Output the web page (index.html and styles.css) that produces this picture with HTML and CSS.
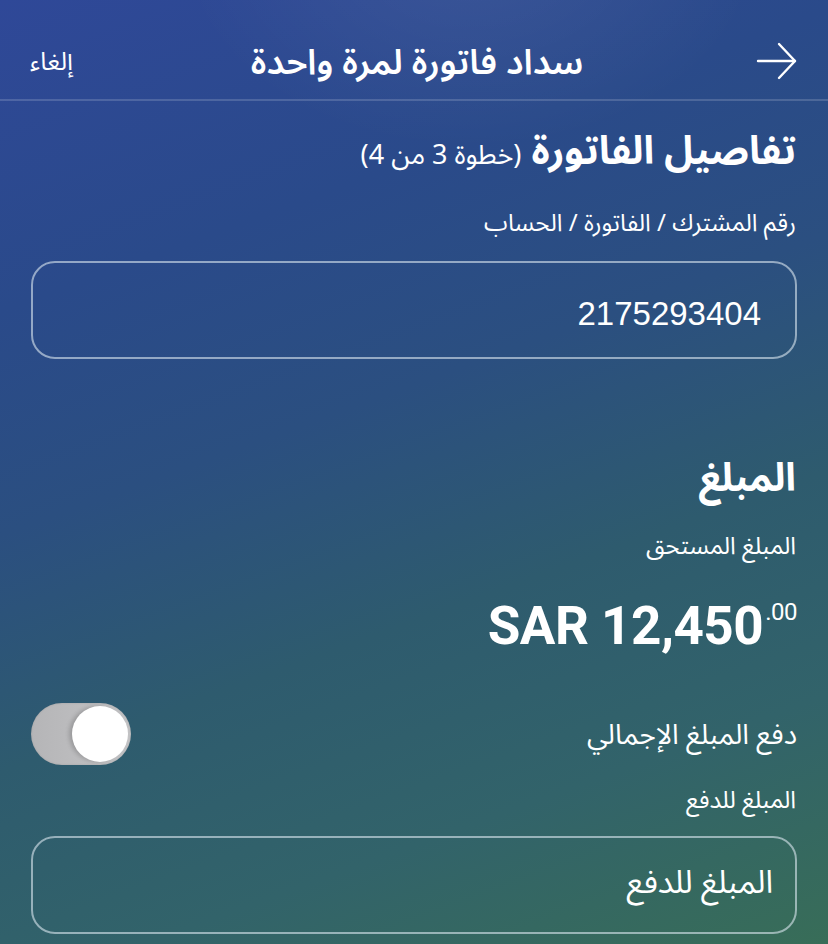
FILE: index.html
```html
<!DOCTYPE html>
<html lang="ar" dir="rtl">
<head>
    <meta charset="UTF-8">
    <meta name="viewport" content="width=device-width, initial-scale=1.0">
    <title>سداد فاتورة لمرة واحدة</title>
    <link rel="stylesheet" href="styles.css">
</head>
<body>
    <div class="screen">
        <header class="topbar">
            <button class="back" aria-label="رجوع">
                <svg width="42" height="40" viewBox="0 0 42 40" fill="none" stroke="#fff" stroke-width="2.4" stroke-linecap="round" stroke-linejoin="round">
                    <path d="M2 20 H39"/>
                    <path d="M23 3 L39 20 L23 37"/>
                </svg>
            </button>
            <h1 class="title">سداد فاتورة لمرة واحدة</h1>
            <button class="cancel">إلغاء</button>
        </header>

        <main class="content">
            <h2 class="section-title">تفاصيل الفاتورة <span class="step">(خطوة 3 من 4)</span></h2>

            <label class="label">رقم المشترك / الفاتورة / الحساب</label>
            <div class="field">
                <span class="field-value">2175293404</span>
            </div>

            <h2 class="section-title amount-title">المبلغ</h2>
            <div class="label">المبلغ المستحق</div>
            <div class="amount" dir="ltr">SAR 12,450<sup>.00</sup></div>

            <div class="toggle-row">
                <span class="toggle-label">دفع المبلغ الإجمالي</span>
                <div class="switch">
                    <div class="knob"></div>
                </div>
            </div>

            <label class="label">المبلغ للدفع</label>
            <div class="field">
                <span class="field-placeholder">المبلغ للدفع</span>
            </div>
        </main>
    </div>
</body>
</html>
```

FILE: styles.css
```css
* {
    margin: 0;
    padding: 0;
    box-sizing: border-box;
}

body {
    font-family: "Noto Sans Arabic", "DejaVu Sans", "Noto Sans", sans-serif;
    color: #fff;
    width: 828px;
    height: 944px;
    overflow: hidden;
}

.screen {
    position: relative;
    width: 828px;
    height: 944px;
    overflow: hidden;
    background:
        radial-gradient(ellipse 420px 300px at 470px -60px, rgba(255, 255, 255, 0.07), rgba(255, 255, 255, 0) 70%),
        linear-gradient(160deg, #2f4898 0%, #2a4a8a 25%, #2b4f80 43%, #2e5b6e 62%, #32636a 80%, #386d58 100%);
}

.topbar {
    height: 101px;
    display: flex;
    align-items: center;
    justify-content: space-between;
    padding: 0 30px 0 30px;
    border-bottom: 2px solid rgba(255, 255, 255, 0.16);
}

.topbar button {
    background: none;
    border: none;
    color: #fff;
    font-family: inherit;
}

.back {
    width: 44px;
    height: 40px;
    margin-top: 22px;
    margin-right: -2px;
    display: flex;
    align-items: center;
    justify-content: flex-end;
}

.back svg {
    display: block;
}

.title {
    font-size: 35px;
    font-weight: 600;
    line-height: 50px;
    margin-top: 26px;
    margin-right: 22px;
}

.cancel {
    font-size: 25px;
    line-height: 40px;
    width: 70px;
    text-align: left;
    margin-top: 24px;
}

.content {
    padding: 0 31px 0 31px;
}

.section-title {
    font-size: 39px;
    font-weight: 700;
    margin-top: 24px;
    line-height: 54px;
    padding-right: 1px;
}

.step {
    font-size: 27px;
    font-weight: 400;
}

.label {
    display: block;
    font-size: 24px;
    line-height: 34px;
    margin-top: 24px;
    padding-right: 1px;
}

.field {
    height: 98px;
    margin-top: 20px;
    border: 2px solid rgba(220, 232, 240, 0.6);
    border-radius: 24px;
    display: flex;
    align-items: center;
    padding: 0 34px;
}

.field-value {
    font-family: "Liberation Sans Narrow", "Liberation Sans", Arial, sans-serif;
    font-size: 33px;
    margin-top: 8px;
}

.field-placeholder {
    font-size: 32px;
    margin-right: -12px;
    margin-top: -4px;
}

.amount-title {
    margin-top: 93px;
}

.label + .amount {
    margin-top: 16px;
}

.amount {
    font-family: Roboto, "Liberation Sans", Arial, sans-serif;
    font-size: 53px;
    font-weight: 700;
    text-align: right;
    line-height: 64px;
    letter-spacing: -0.5px;
}

.amount sup {
    font-size: 24px;
    font-weight: 400;
    vertical-align: 24px;
    margin-left: 2px;
}

.toggle-row {
    display: flex;
    align-items: center;
    justify-content: space-between;
    margin-top: 45px;
}

.toggle-label {
    font-size: 28px;
    margin-top: 2px;
}

.switch {
    width: 100px;
    height: 62px;
    border-radius: 31px;
    background: linear-gradient(90deg, #b5b5b7, #c4c4c6);
    padding: 3px;
    display: flex;
    justify-content: flex-start;
    box-shadow: inset 0 0 2px rgba(0, 0, 0, 0.15);
}

.knob {
    width: 56px;
    height: 56px;
    border-radius: 50%;
    background: #fff;
    box-shadow: -3px 0 4px rgba(0, 0, 0, 0.18);
}

.toggle-row + .label {
    margin-top: 19px;
}

.toggle-row + .label + .field {
    margin-top: 18px;
}
```
